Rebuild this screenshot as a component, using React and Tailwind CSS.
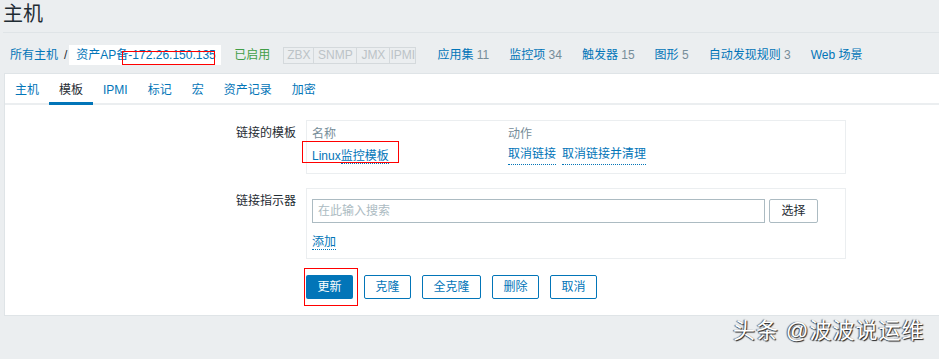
import React from "react";

const font = { fontFamily: '"Liberation Sans", Arial, "Noto Sans CJK SC", sans-serif' };

function Dotted({ children, className = "" }) {
  return (
    <span className={"text-[#0275b8] border-b border-dotted border-[#0275b8] leading-[14px] " + className}>
      {children}
    </span>
  );
}

export default function App() {
  return (
    <div className="relative w-[939px] h-[359px] overflow-hidden bg-[#ebeef0] text-[12px] text-[#1f2c33]" style={font}>
      {/* Title */}
      <div className="ml-[3px] h-[33px] border-b border-[#dfe4e7] flex items-start pt-[1px]">
        <h1 className="text-[20px] leading-[26px] text-[#1f2c33]">主机</h1>
      </div>

      {/* Breadcrumb / nav */}
      <div className="h-[40px] flex items-center pt-[4px] pl-[10px] whitespace-nowrap">
        <span className="text-[#0275b8]">所有主机</span>
        <span className="ml-[6px] mr-[2px] text-[#1f2c33]">/</span>
        <span className="relative bg-white h-[20px] w-[152px] pl-[7px] flex items-center text-[#0275b8]">
          资产AP备-172.26.150.135
        </span>
        <span className="ml-[13px] text-[#429e47]">已启用</span>
        <span className="ml-[13px] flex h-[17px] border border-[#d4d9dc] text-[#bcc3c7] text-[12px]">
          <span className="w-[30px] flex items-center justify-center border-r border-[#d4d9dc]">ZBX</span>
          <span className="w-[43px] flex items-center justify-center border-r border-[#d4d9dc]">SNMP</span>
          <span className="w-[33px] flex items-center justify-center border-r border-[#d4d9dc]">JMX</span>
          <span className="w-[25px] flex items-center justify-center">IPMI</span>
        </span>
        <span className="ml-[21px] text-[#0275b8]">应用集 <span className="text-[#768d99]">11</span></span>
        <span className="ml-[20px] text-[#0275b8]">监控项 <span className="text-[#768d99]">34</span></span>
        <span className="ml-[20px] text-[#0275b8]">触发器 <span className="text-[#768d99]">15</span></span>
        <span className="ml-[20px] text-[#0275b8]">图形 <span className="text-[#768d99]">5</span></span>
        <span className="ml-[20px] text-[#0275b8]">自动发现规则 <span className="text-[#768d99]">3</span></span>
        <span className="ml-[20px] text-[#0275b8]">Web 场景</span>
      </div>

      {/* Panel */}
      <div className="ml-[4px] bg-white border-t border-l border-b border-[#dfe4e7] h-[243px]">
        <div className="flex h-[31px] border-b-2 border-[#ebeef0]">
          {["主机", "模板", "IPMI", "标记", "宏", "资产记录", "加密"].map((t, i) => (
            <div
              key={t}
              className={
                "px-[10px] flex items-center h-[31px] " +
                (i === 1 ? "text-[#1f2c33] border-b-[3px] border-[#0275b8] pt-[3px]" : "text-[#0275b8]")
              }
            >
              {t}
            </div>
          ))}
        </div>

        {/* Form */}
        <div className="pt-[15px]">
          <div className="flex">
            <div className="w-[301px] text-right pr-[10px] pt-[4px] text-[#1f2c33]">链接的模板</div>
            <div className="w-[540px] h-[54px] border border-[#ebeef0] px-[5px] pt-[4px]">
              <div className="flex text-[#768d99] h-[16px]">
                <span className="w-[196px]">名称</span>
                <span>动作</span>
              </div>
              <div className="flex mt-[6px] relative">
                <span className="w-[196px] text-[#0275b8]">
                  Linux<span className="border-b border-dotted border-[#0275b8]">监控模板</span>
                </span>
                <Dotted>取消链接</Dotted>
                <Dotted className="ml-[6px]">取消链接并清理</Dotted>
                <div className="absolute left-[-10px] top-[-6px] w-[97px] h-[22px] border border-[#ff0000]" />
              </div>
            </div>
          </div>

          <div className="flex mt-[14px]">
            <div className="w-[301px] text-right pr-[10px] pt-[4px] text-[#1f2c33]">链接指示器</div>
            <div className="w-[540px] h-[71px] border border-[#ebeef0] px-[5px] pt-[10px]">
              <div className="flex items-center">
                <div className="w-[453px] h-[24px] border border-[#acbbc2] flex items-center px-[5px] text-[#acbbc2]">
                  在此输入搜索
                </div>
                <div className="ml-[4px] w-[49px] h-[24px] border border-[#acbbc2] rounded-[2px] flex items-center justify-center text-[#1f2c33]">
                  选择
                </div>
              </div>
              <div className="mt-[10px]">
                <Dotted>添加</Dotted>
              </div>
            </div>
          </div>

          <div className="flex mt-[16px] pl-[301px] gap-[11px] relative">
            <div className="w-[47px] h-[24px] rounded-[2px] bg-[#0275b8] text-white flex items-center justify-center">更新</div>
            <div className="w-[47px] h-[24px] rounded-[2px] border border-[#0275b8] text-[#0275b8] flex items-center justify-center">克隆</div>
            <div className="w-[59px] h-[24px] rounded-[2px] border border-[#0275b8] text-[#0275b8] flex items-center justify-center">全克隆</div>
            <div className="w-[47px] h-[24px] rounded-[2px] border border-[#0275b8] text-[#0275b8] flex items-center justify-center">删除</div>
            <div className="w-[47px] h-[24px] rounded-[2px] border border-[#0275b8] text-[#0275b8] flex items-center justify-center">取消</div>
            <div className="absolute left-[299px] top-[-7px] w-[54px] h-[38px] border border-[#ff0000]" />
          </div>
        </div>
      </div>

      {/* Red annotation on breadcrumb */}
      <div className="absolute left-[122px] top-[51px] w-[93px] h-[14px] border border-[#ff0000]" />

      {/* Watermark */}
      <div className="absolute left-[733px] top-[317px] text-[22px] leading-[28px] tracking-[1px] text-white [text-shadow:1px_1px_1px_#222,-1px_0_1px_#555]">
        头条 @波波说运维
      </div>
    </div>
  );
}
